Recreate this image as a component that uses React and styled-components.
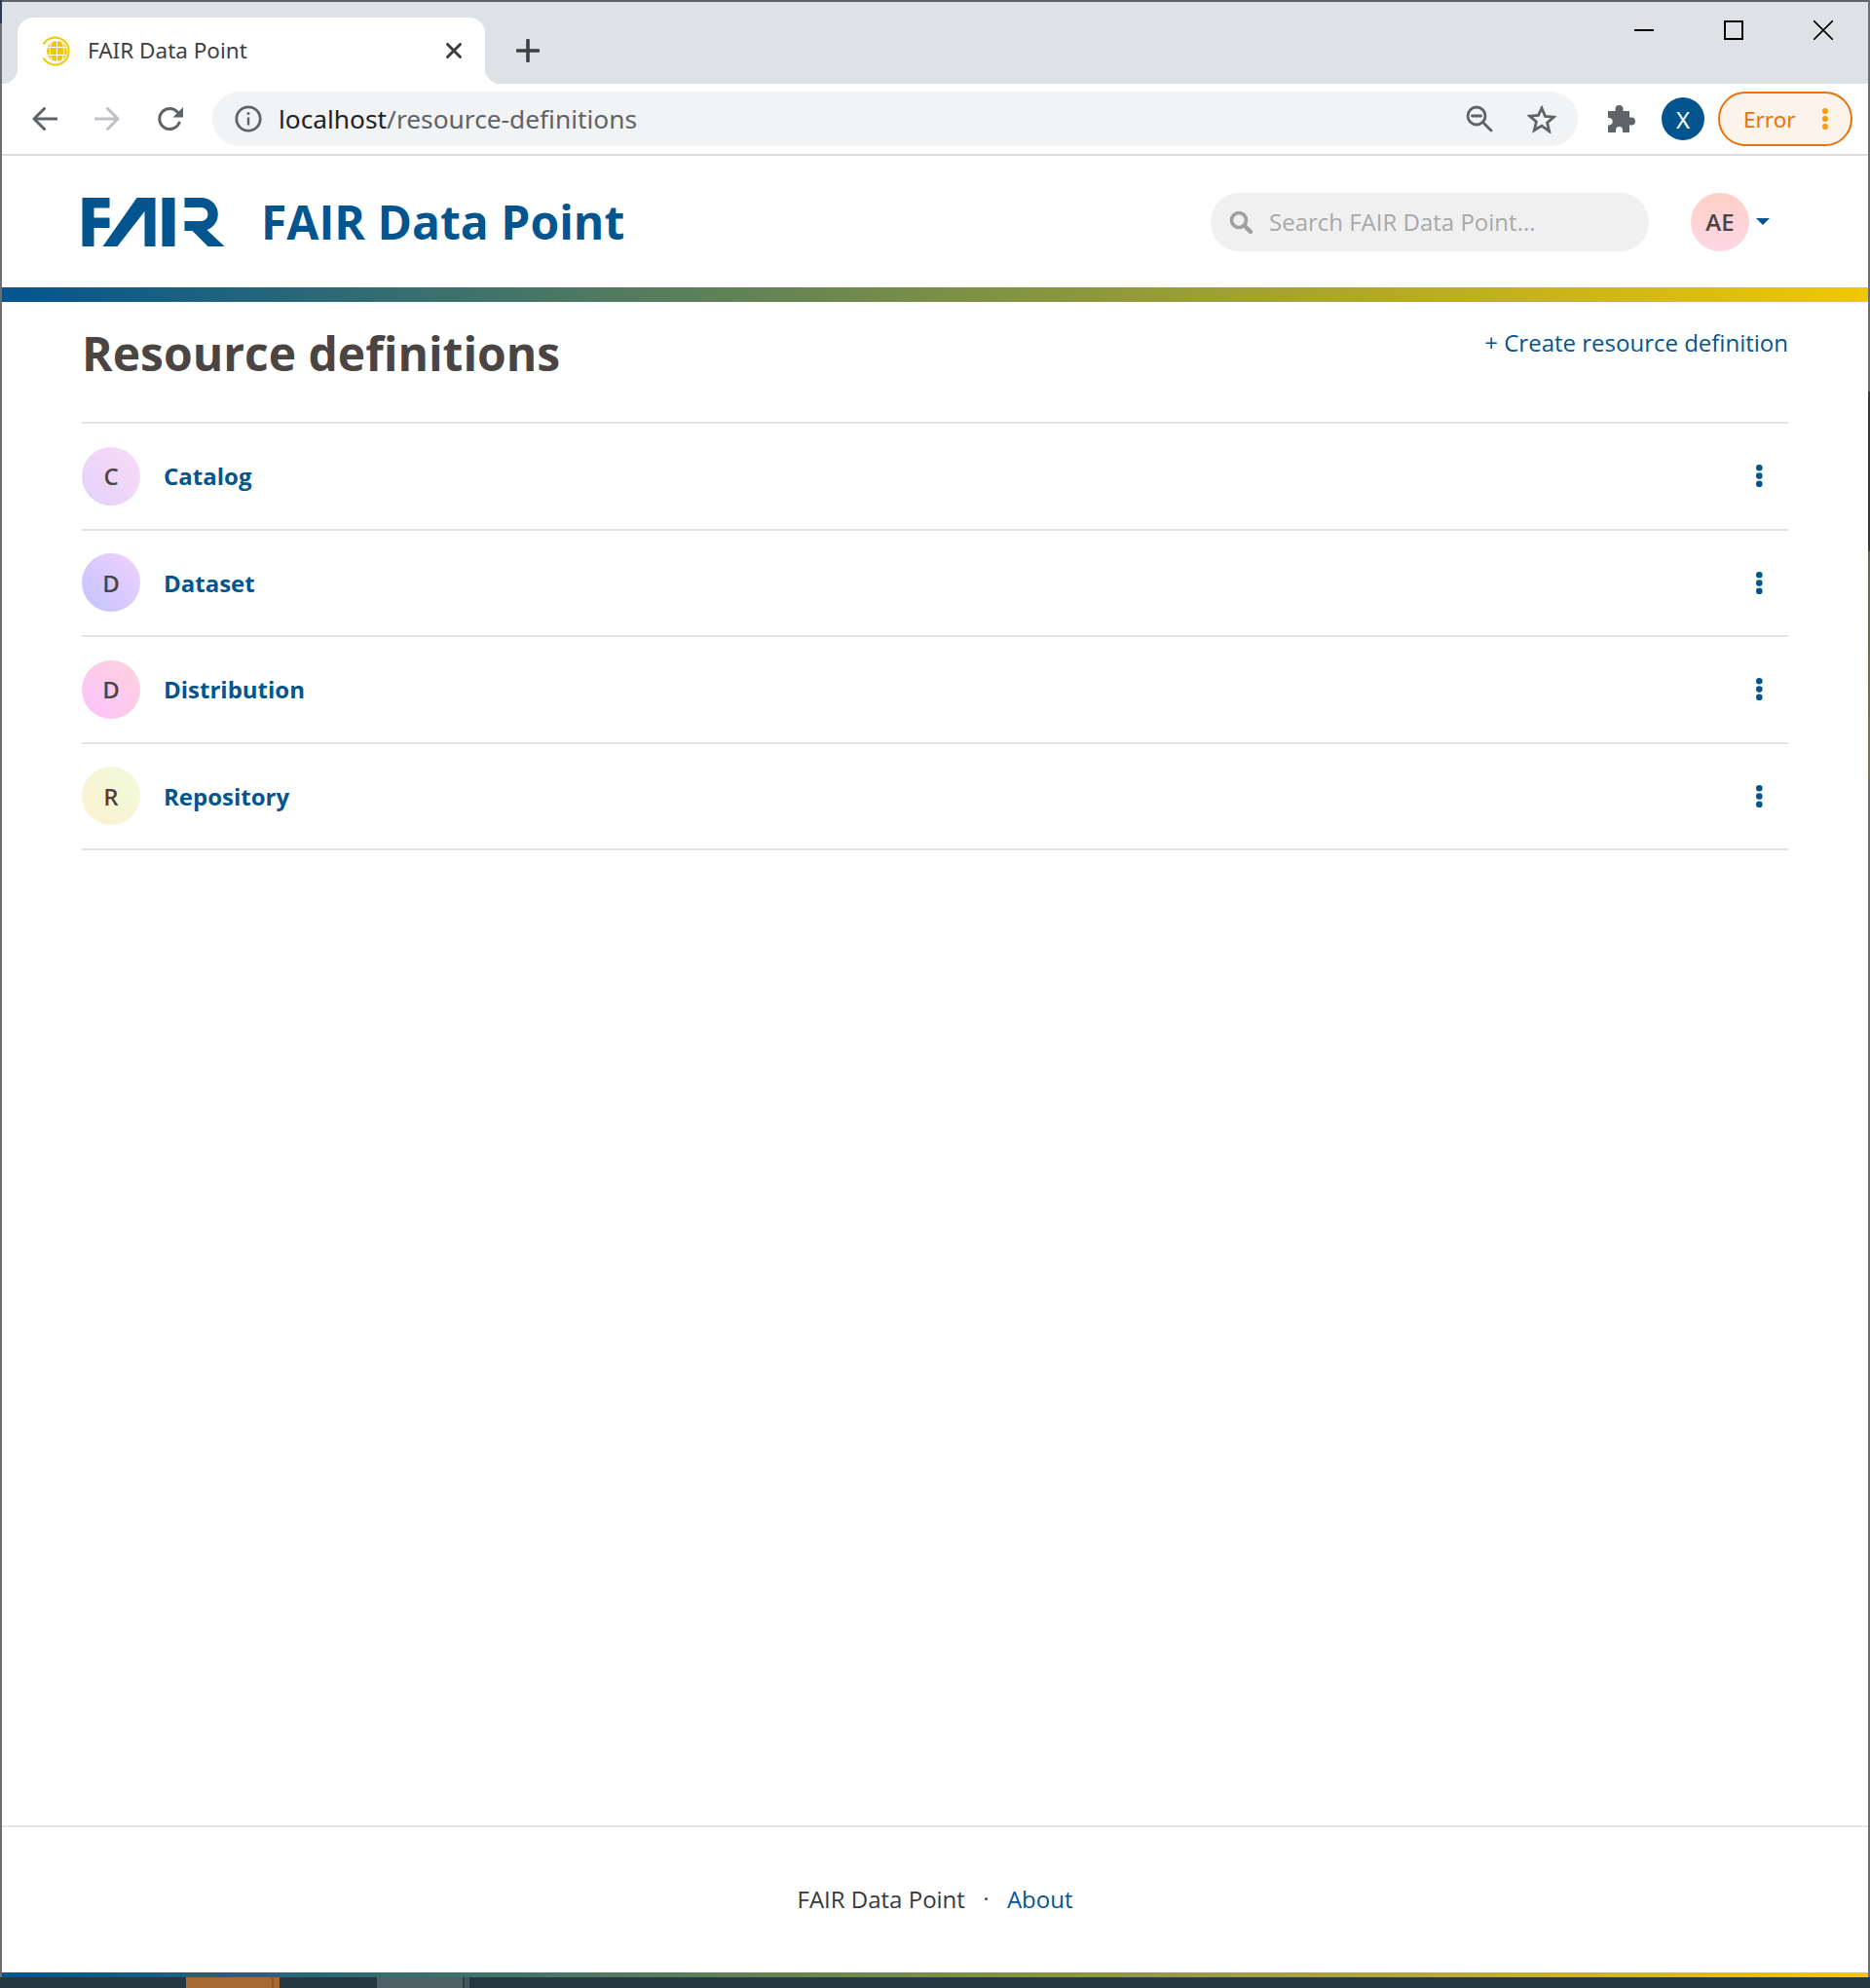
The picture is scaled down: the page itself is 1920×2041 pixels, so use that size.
import React from 'react';
import styled, {createGlobalStyle} from 'styled-components';

const BLUE = '#03558f';
const GRADIENT = 'linear-gradient(to right, #03558f, #f0c800)';

const GlobalStyle = createGlobalStyle`
  html, body {
    margin: 0;
    padding: 0;
    background: #fff;
  }
  * {
    box-sizing: border-box;
  }
`;

const Desktop = styled.div`
  display: grid;
  grid-template-rows: 1fr 11px;
  height: 2041px;
  width: 1920px;
  overflow: hidden;
`;
const Frame = styled.div`
  background:
    linear-gradient(to bottom, #6d6d6d 0, #6d6d6d 402px, #3a3835 402px, #3a3835 566px, #6b6458 566px, #7a6f62 800px, #6d6d6d 800px) right top / 2px 100% no-repeat,
    linear-gradient(to bottom, #2c3a55 0, #2c3a55 24px, #6d6d6d 24px) left top / 2px 100% no-repeat,
    #5f6368;
  display: flex;
  flex-direction: column;
  min-height: 0;
  padding: 2px 2px 0;
`;
const Taskbar = styled.div`
  background: #25373f;
  display: flex;
`;
const TaskItem = styled.span`
  background: ${p => p.$color || 'transparent'};
  flex: 0 0 ${p => p.$width}px;
`;

/* browser chrome */
const TabStrip = styled.div`
  align-items: stretch;
  background: #dee1e6;
  display: flex;
  flex-shrink: 0;
  height: 84px;
  padding-left: 16px;
  padding-top: 16px;
`;
const Tab = styled.div`
  align-items: center;
  background: #fff;
  border-radius: 16px 16px 0 0;
  display: flex;
  padding: 0 24px 0 25px;
  position: relative;
  width: 480px;

  &::before, &::after {
    bottom: 0;
    content: '';
    height: 16px;
    position: absolute;
    width: 16px;
  }
  &::before {
    background: radial-gradient(circle at 0 0, transparent 16px, #fff 16.5px);
    left: -16px;
  }
  &::after {
    background: radial-gradient(circle at 100% 0, transparent 16px, #fff 16.5px);
    right: -16px;
  }
`;
const TabTitle = styled.span`
  color: #3c4043;
  flex: 1;
  font-family: 'Noto Sans', sans-serif;
  font-size: 22.5px;
  margin-left: 17px;
  position: relative;
  top: -1px;
`;
const NewTab = styled.div`
  align-items: center;
  display: flex;
  margin-left: 32px;
`;
const WindowControls = styled.div`
  align-items: center;
  align-self: flex-start;
  display: flex;
  gap: 72px;
  margin-left: auto;
  margin-right: 36px;
  margin-top: 3px;
`;
const Toolbar = styled.div`
  align-items: center;
  background: #fff;
  border-bottom: 2px solid #dadce0;
  display: flex;
  flex-shrink: 0;
  height: 74px;
  padding: 0 14px 0 31px;
`;
const NavGroup = styled.div`
  align-items: center;
  display: flex;
  gap: 38px;
`;
const AddressBar = styled.div`
  align-items: center;
  background: #f1f3f4;
  border-radius: 28px;
  display: flex;
  height: 56px;
  margin-left: 29px;
  padding: 0 22px 0 23px;
  width: 1402px;
`;
const Url = styled.span`
  color: #5f6368;
  flex: 1;
  font-family: 'Noto Sans', sans-serif;
  font-size: 26.3px;
  margin-left: 17px;

  b {
    color: #202124;
    font-weight: 400;
  }
`;
const AddressIcons = styled.div`
  align-items: center;
  display: flex;
  gap: 35px;
`;
const ToolbarIcons = styled.div`
  align-items: center;
  display: flex;
  margin-left: 30px;
`;
const ProfileBadge = styled.span`
  align-items: center;
  background: ${BLUE};
  border-radius: 50%;
  color: #fff;
  display: flex;
  font-family: 'Noto Sans', sans-serif;
  font-size: 24px;
  height: 44px;
  justify-content: center;
  margin-left: 27px;
  width: 44px;
`;
const ErrorPill = styled.div`
  align-items: center;
  background: #fcf3ea;
  border: 2px solid #e8710a;
  border-radius: 28px;
  color: #e8710a;
  display: flex;
  font-family: 'Noto Sans', sans-serif;
  font-size: 22.5px;
  height: 56px;
  justify-content: space-between;
  margin-left: 14px;
  padding: 0 23px 0 24px;
  width: 138px;
`;

/* app */
const Page = styled.div`
  background: #fff;
  display: flex;
  flex: 1;
  flex-direction: column;
  font-family: 'Open Sans', sans-serif;
  min-height: 0;
`;
const Header = styled.header`
  align-items: center;
  display: flex;
  flex-shrink: 0;
  height: 135px;
  padding: 0 101px 0 82px;
`;
const Brand = styled.a`
  align-items: center;
  color: ${BLUE};
  display: flex;
  font-size: 48px;
  font-weight: 700;
  gap: 37px;
  text-decoration: none;
`;
const Search = styled.div`
  align-items: center;
  background: #f0f0f0;
  border-radius: 30px;
  color: #a8a8a8;
  display: flex;
  font-size: 24px;
  gap: 17px;
  height: 60px;
  margin-left: auto;
  padding-left: 19px;
  width: 450px;
`;
const UserMenu = styled.div`
  align-items: center;
  display: flex;
  gap: 7px;
  margin-left: 43px;
`;
const Avatar = styled.span`
  align-items: center;
  background: ${p => p.$bg};
  border-radius: 50%;
  color: #4a4543;
  display: flex;
  flex-shrink: 0;
  font-size: 24px;
  font-weight: 600;
  height: 60px;
  justify-content: center;
  width: 60px;
`;
const Caret = styled.span`
  border-left: 7px solid transparent;
  border-right: 7px solid transparent;
  border-top: 7px solid ${BLUE};
`;
const ColorBar = styled.div`
  background: ${GRADIENT};
  flex-shrink: 0;
  height: ${p => p.$height}px;
`;
const Content = styled.main`
  flex: 1;
  padding: 0 82px;
`;
const TitleRow = styled.div`
  align-items: flex-start;
  display: flex;
  height: 123px;
  justify-content: space-between;
  padding-top: 21px;
`;
const Title = styled.h1`
  color: #4a4543;
  font-size: 48px;
  font-weight: 700;
  line-height: 64px;
  margin: 0;
`;
const CreateLink = styled.a`
  color: ${BLUE};
  font-size: 24px;
  line-height: 34px;
  margin-top: 4px;
  text-decoration: none;
`;
const List = styled.div`
  border-top: 2px solid #e4e4e4;
`;
const Row = styled.div`
  align-items: center;
  border-bottom: 2px solid #e4e4e4;
  display: flex;
  gap: 24px;
  height: 109.5px;
  padding-right: 26px;
`;
const RowName = styled.a`
  color: ${BLUE};
  flex: 1;
  font-size: 24px;
  font-weight: 700;
  text-decoration: none;
`;
const Footer = styled.footer`
  align-items: center;
  border-top: 2px solid #e4e4e4;
  color: #36393d;
  display: flex;
  flex-shrink: 0;
  font-size: 24px;
  height: 151px;
  justify-content: center;
  padding-bottom: 3px;
`;
const FooterDot = styled.span`
  background: #4a4543;
  border-radius: 50%;
  height: 3px;
  margin: 0 20px;
  width: 3px;
`;
const FooterLink = styled.a`
  color: ${BLUE};
  text-decoration: none;
`;

const Favicon = () => (
  <svg width="30" height="31" viewBox="0 0 30 31" fill="none" stroke="#f0c800">
    <path d="M1.500 8.500A14 14 0 1 1 1.500 22.500" strokeWidth="2" />
    <circle cx="15.500" cy="15.500" r="10.500" fill="#f0c800" stroke="none" />
    <path d="M5 11.500h21M5 19.500h21M15.500 5v21M10 7c-2.500 5-2.500 12 0 17M21 7c2.500 5 2.500 12 0 17" stroke="#fff" strokeWidth="1" />
  </svg>
);
const TabClose = () => (
  <svg width="16" height="16" viewBox="0 0 16 16" stroke="#3c4043" strokeWidth="3" strokeLinecap="round">
    <path d="M1.500 1.500l13 13M14.500 1.500l-13 13" />
  </svg>
);
const PlusIcon = () => (
  <svg width="24" height="24" viewBox="0 0 24 24" stroke="#3c4043" strokeWidth="3.600" strokeLinecap="round">
    <path d="M12 1.500v21M1.500 12h21" />
  </svg>
);
const Minimize = () => (
  <svg width="20" height="20" viewBox="0 0 20 20" stroke="#000" strokeWidth="2"><path d="M0 10h20" /></svg>
);
const Maximize = () => (
  <svg width="20" height="20" viewBox="0 0 20 20" fill="none" stroke="#000" strokeWidth="2"><rect x="1" y="1" width="18" height="18" /></svg>
);
const WinClose = () => (
  <svg width="20" height="20" viewBox="0 0 20 20" stroke="#000" strokeWidth="1.600"><path d="M0 0l20 20M20 0L0 20" /></svg>
);
const Arrow = ({color, flip}) => (
  <svg width="26" height="24" viewBox="0 0 26 24" fill="none" stroke={color} strokeWidth="3" strokeLinecap="round" strokeLinejoin="round" style={flip ? {transform: 'scaleX(-1)'} : undefined}>
    <path d="M25 12H2M12.500 1.500L2 12l10.500 10.500" />
  </svg>
);
const Reload = () => (
  <svg width="28" height="26" viewBox="0 0 28 26">
    <path d="M23 17a10.500 10.500 0 1 1-1.500-10.500" fill="none" stroke="#5f6368" strokeWidth="3" strokeLinecap="round" />
    <path d="M27 1v10.500H16.500z" fill="#5f6368" />
  </svg>
);
const InfoIcon = () => (
  <svg width="28" height="28" viewBox="0 0 28 28" fill="none" stroke="#5f6368">
    <circle cx="14" cy="14" r="12.200" strokeWidth="2.800" />
    <path d="M14 12.500v8" strokeWidth="2.400" />
    <circle cx="14" cy="8.500" r="1.500" fill="#5f6368" stroke="none" />
  </svg>
);
const ZoomOut = () => (
  <svg width="28" height="28" viewBox="0 0 28 28" fill="none" stroke="#5f6368" strokeWidth="2.800" strokeLinecap="round">
    <circle cx="11" cy="11" r="9" />
    <path d="M6.500 11h9M18 18l8 8" />
  </svg>
);
const Star = () => (
  <svg width="30" height="29" viewBox="0 0 30 29" fill="none" stroke="#5f6368" strokeWidth="2.800" strokeLinejoin="miter">
    <path d="M15 3l3.500 8.400 9 .7-6.900 5.900 2.100 8.800L15 21.100l-7.700 4.700 2.100-8.800-6.900-5.900 9-.7z" />
  </svg>
);
const Puzzle = () => (
  <svg width="29" height="29" viewBox="0 0 29 29" fill="#5f6368">
    <path d="M1 6h7.500V4a4 4 0 0 1 8 0v2H23v6.500h2a4 4 0 0 1 0 8h-2V28h-7v-2.500a3.500 3.500 0 0 0-7 0V28H1v-7.500h1.500a3.800 3.800 0 0 0 0-7.500H1z" />
  </svg>
);
const Dots = ({color, size = 3.3, gap = 8.3}) => (
  <svg width={size * 2} height={gap * 2 + size * 2} viewBox={`0 0 ${size * 2} ${gap * 2 + size * 2}`} fill={color}>
    <circle cx={size} cy={size} r={size} />
    <circle cx={size} cy={size + gap} r={size} />
    <circle cx={size} cy={size + gap * 2} r={size} />
  </svg>
);
const SearchIcon = () => (
  <svg width="24" height="24" viewBox="0 0 24 24" fill="none" stroke="#a0a0a0" strokeLinecap="round">
    <circle cx="10" cy="10" r="7.500" strokeWidth="3.600" />
    <path d="M15.500 15.500l6.500 6.500" strokeWidth="4.400" />
  </svg>
);
const FairLogo = () => (
  <svg width="147" height="50" viewBox="0 0 146 50" fill={BLUE}>
    <path d="M0 0h28v10.500H12v10h16V31H12v19H0z" />
    <path d="M21 50L56 0h19v50H64V14L36 50z" />
    <path d="M82 0h13v50H82z" />
    <path d="M105 0H122A17 17 0 0 1 128 33L146 50H129L113 34H105V24H122A7 7 0 0 0 122 10H105z" />
  </svg>
);

const definitions = [
  {name: 'Catalog', letter: 'C', bg: 'linear-gradient(45deg, #e3d0fb, #f9dcf5)'},
  {name: 'Dataset', letter: 'D', bg: 'linear-gradient(45deg, #c2c2ff, #f0d2fd)'},
  {name: 'Distribution', letter: 'D', bg: 'linear-gradient(45deg, #fbc2fb, #fed2de)'},
  {name: 'Repository', letter: 'R', bg: 'linear-gradient(45deg, #fbf1d0, #effbdc)'},
];

const taskItems = [
  {width: 191},
  {width: 88, color: '#a86a35'},
  {width: 2, color: '#8f5a28'},
  {width: 6, color: '#a86a35'},
  {width: 100},
  {width: 88, color: '#4f6066'},
  {width: 2, color: '#2f3a42'},
  {width: 5, color: '#46545b'},
];

const App = () => (
  <Desktop>
    <GlobalStyle />
    <Frame>
      <TabStrip>
        <Tab>
          <Favicon />
          <TabTitle>FAIR Data Point</TabTitle>
          <TabClose />
        </Tab>
        <NewTab><PlusIcon /></NewTab>
        <WindowControls>
          <Minimize />
          <Maximize />
          <WinClose />
        </WindowControls>
      </TabStrip>
      <Toolbar>
        <NavGroup>
          <Arrow color="#5f6368" />
          <Arrow color="#bdc1c6" flip />
          <Reload />
        </NavGroup>
        <AddressBar>
          <InfoIcon />
          <Url><b>localhost</b>/resource-definitions</Url>
          <AddressIcons>
            <ZoomOut />
            <Star />
          </AddressIcons>
        </AddressBar>
        <ToolbarIcons>
          <Puzzle />
          <ProfileBadge>X</ProfileBadge>
          <ErrorPill>
            Error
            <Dots color="#f99b0c" size={3} gap={8} />
          </ErrorPill>
        </ToolbarIcons>
      </Toolbar>
      <Page>
        <Header>
          <Brand href="#">
            <FairLogo />
            FAIR Data Point
          </Brand>
          <Search>
            <SearchIcon />
            Search FAIR Data Point...
          </Search>
          <UserMenu>
            <Avatar $bg="linear-gradient(to top, #fed6e8, #fdd0c4)">AE</Avatar>
            <Caret />
          </UserMenu>
        </Header>
        <ColorBar $height={15} />
        <Content>
          <TitleRow>
            <Title>Resource definitions</Title>
            <CreateLink href="#">+ Create resource definition</CreateLink>
          </TitleRow>
          <List>
            {definitions.map(d => (
              <Row key={d.name}>
                <Avatar $bg={d.bg}>{d.letter}</Avatar>
                <RowName href="#">{d.name}</RowName>
                <Dots color={BLUE} />
              </Row>
            ))}
          </List>
        </Content>
        <Footer>
          FAIR Data Point
          <FooterDot />
          <FooterLink href="#">About</FooterLink>
        </Footer>
        <ColorBar $height={5} />
      </Page>
    </Frame>
    <Taskbar>
      {taskItems.map((t, i) => <TaskItem key={i} $width={t.width} $color={t.color} />)}
    </Taskbar>
  </Desktop>
);

export default App;
